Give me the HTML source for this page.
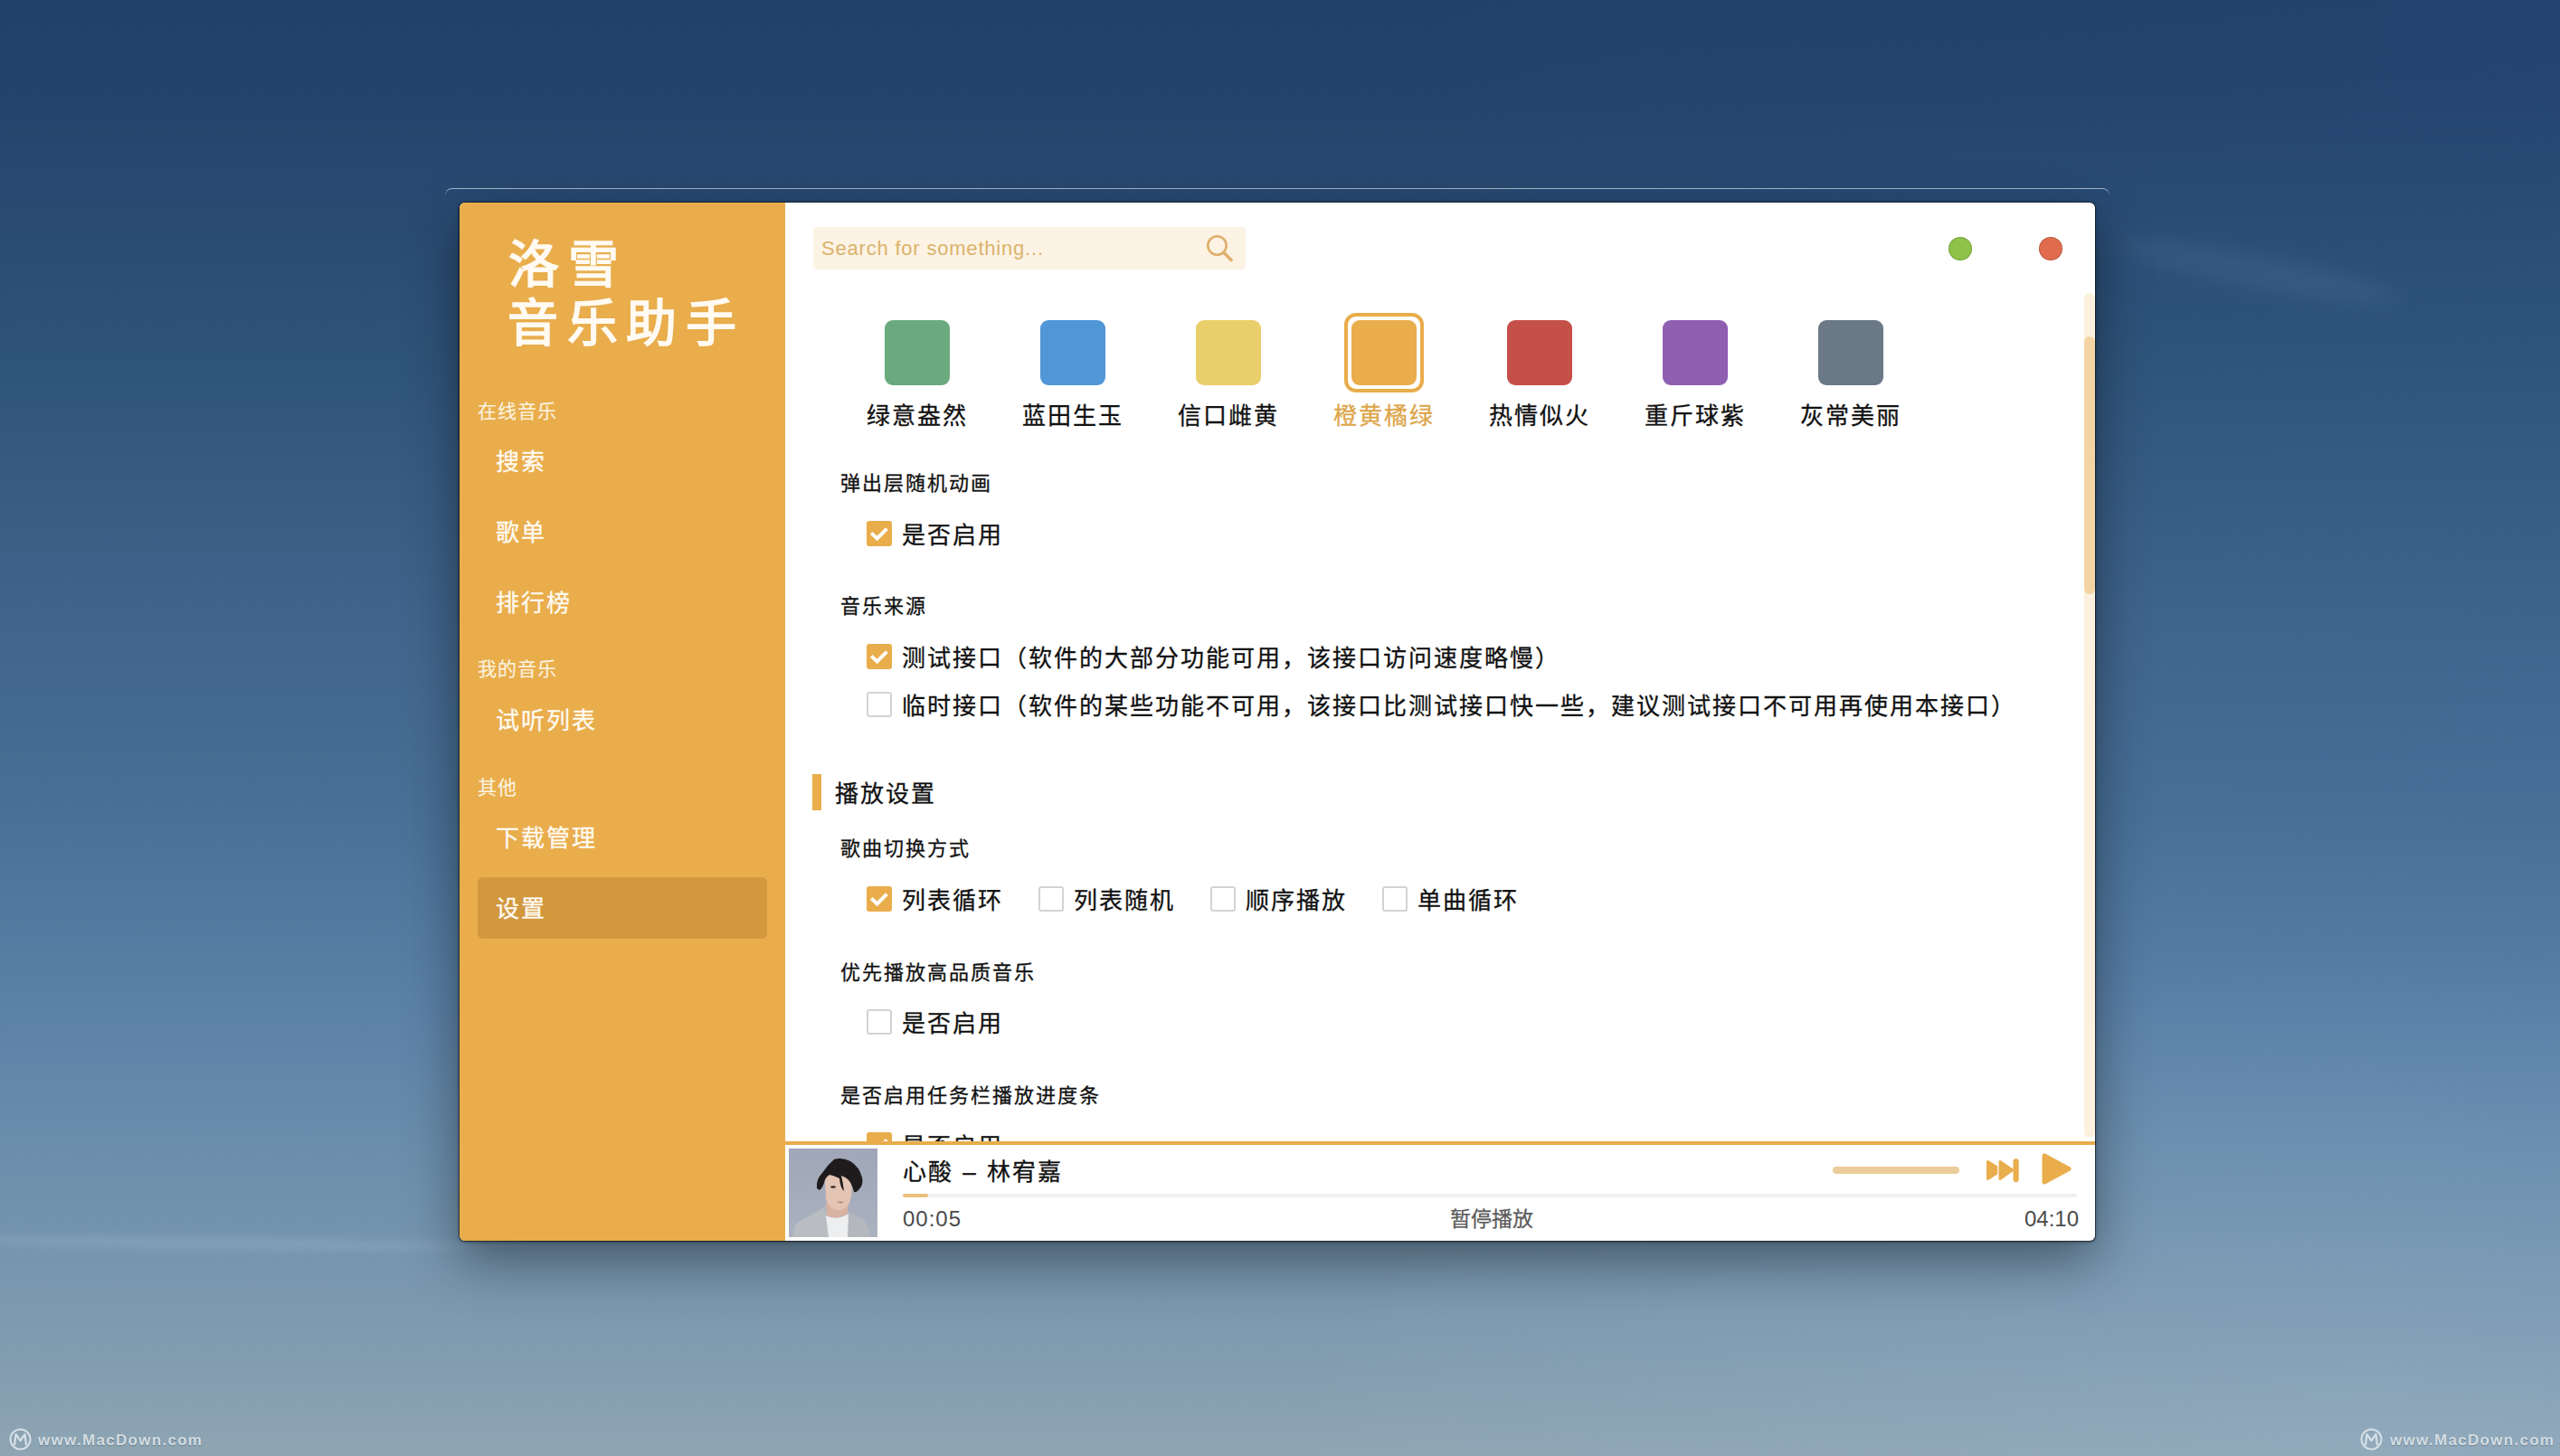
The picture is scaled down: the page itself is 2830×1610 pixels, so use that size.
<!DOCTYPE html>
<html lang="zh-CN"><head><meta charset="utf-8">
<style>
*{margin:0;padding:0;box-sizing:border-box}
html,body{width:2830px;height:1610px;overflow:hidden}
body{position:relative;font-family:"Liberation Sans",sans-serif;
background:radial-gradient(ellipse 45% 35% at 95% 100%,rgba(200,220,235,.16),rgba(200,220,235,0)),linear-gradient(90deg,rgba(40,100,180,0) 55%,rgba(40,100,180,.07) 100%),linear-gradient(180deg,#22416a 0%,#24436c 6.2%,#2f5479 24.8%,#41658c 43.5%,#497096 55.9%,#5a80a6 68.3%,#6d90ad 80.7%,#829cb0 93.2%,#8ea5b3 100%);}
.abs{position:absolute;white-space:nowrap}
#bgwin{position:absolute;left:492px;top:208px;width:1840px;height:60px;border-top:1.5px solid rgba(205,222,240,.75);border-radius:8px 8px 0 0;}
#win{position:absolute;left:508px;top:224px;width:1808px;height:1148px;border-radius:6px;overflow:hidden;background:#fff;box-shadow:0 22px 60px rgba(0,0,0,.42),0 1px 4px rgba(0,0,0,.45),0 0 0 1px rgba(10,20,30,.55)}
#side{position:absolute;left:0;top:0;width:360px;height:1148px;background:#e9ad4c}
.logo{position:absolute;margin-top:1px;color:#fffaf2;font-size:56px;line-height:1;letter-spacing:9.5px;font-weight:700}
.cat{position:absolute;left:20px;margin-top:-0.5px;color:#fbf1df;font-size:21px;letter-spacing:1px;line-height:1;-webkit-text-stroke:0.2px #fbf1df}
.item{position:absolute;left:20px;width:320px;height:68px;border-radius:6px;color:#fffaf2;font-size:26px;letter-spacing:2px;line-height:71px;padding-left:20px;-webkit-text-stroke:0.3px #fffaf2}
.item.on{background:#d2983e}
#main{position:absolute;left:360px;top:0;width:1448px;height:1148px}
.t24{font-size:22px;letter-spacing:2px;line-height:1;color:#111;margin-top:2px;-webkit-text-stroke-width:0.3px}
.t28{font-size:26px;letter-spacing:2px;line-height:1;color:#111;margin-top:3px;-webkit-text-stroke-width:0.3px}
.cb{position:absolute;width:28px;height:28px;border-radius:3px;border:2px solid #d3d3d3;background:#fff}
.cb.on{background:#e9ad4c;border-color:#e9ad4c}
.sw{position:absolute;top:130px;width:72px;height:72px;border-radius:9px}
</style></head><body>
<div class="abs" style="left:-40px;top:1368px;width:560px;height:14px;border-radius:50%;background:rgba(190,210,228,.16);filter:blur(4px);transform:rotate(0.8deg)"></div>
<div class="abs" style="left:2335px;top:282px;width:320px;height:36px;border-radius:50%;background:rgba(170,195,225,.075);filter:blur(10px);transform:rotate(11deg)"></div>
<div id="bgwin"></div>
<div id="win">
 <div id="side">
  <div class="logo abs" style="left:54px;top:40px">洛雪</div>
  <div class="logo abs" style="left:53px;top:105px">音乐助手</div>
  <div class="cat abs" style="top:220px">在线音乐</div>
  <div class="item abs" style="top:252px">搜索</div>
  <div class="item abs" style="top:330px">歌单</div>
  <div class="item abs" style="top:408px">排行榜</div>
  <div class="cat abs" style="top:505px">我的音乐</div>
  <div class="item abs" style="top:538px">试听列表</div>
  <div class="cat abs" style="top:636px">其他</div>
  <div class="item abs" style="top:668px">下载管理</div>
  <div class="item on abs" style="top:746px">设置</div>
 </div>
 <div id="main">
  <div id="search" class="abs" style="left:31px;top:27px;width:478px;height:47px;border-radius:4px;background:#fcf3e4"></div>
  <div class="abs" style="left:40px;top:40px;font-size:22px;letter-spacing:0.8px;line-height:1;color:#dbb26c">Search for something...</div>
  <svg class="abs" style="left:460px;top:31px" width="40" height="40" viewBox="0 0 40 40"><circle cx="17.5" cy="16.5" r="10.2" fill="none" stroke="#dfb06c" stroke-width="2.6"/><line x1="25" y1="24.5" x2="33" y2="32.5" stroke="#dfb06c" stroke-width="3.6" stroke-linecap="round"/></svg>
  <div class="abs" style="left:1286px;top:38px;width:26px;height:26px;border-radius:50%;background:#8ec249;box-shadow:inset 0 0 0 1px rgba(90,110,60,.35)"></div>
  <div class="abs" style="left:1386px;top:38px;width:26px;height:26px;border-radius:50%;background:#e06c4d;box-shadow:inset 0 0 0 1px rgba(120,70,50,.35)"></div>
  <div class="sw" style="left:110px;background:#6baa7e"></div>
  <div class="sw" style="left:282px;background:#5196d6"></div>
  <div class="sw" style="left:454px;background:#e9cf6b"></div>
  <div class="abs" style="left:618px;top:122px;width:88px;height:88px;border:4px solid #e9ad4c;border-radius:13px"></div>
  <div class="sw" style="left:626px;background:#e9ad4c"></div>
  <div class="sw" style="left:798px;background:#c5504a"></div>
  <div class="sw" style="left:970px;background:#8f5fb2"></div>
  <div class="sw" style="left:1142px;background:#6b7886"></div>
  <div class="t28 abs lbl" style="left:90px;top:220px">绿意盎然</div>
  <div class="t28 abs lbl" style="left:262px;top:220px">蓝田生玉</div>
  <div class="t28 abs lbl" style="left:434px;top:220px">信口雌黄</div>
  <div class="t28 abs lbl" style="left:606px;top:220px;color:#dda64b">橙黄橘绿</div>
  <div class="t28 abs lbl" style="left:778px;top:220px">热情似火</div>
  <div class="t28 abs lbl" style="left:950px;top:220px">重斤球紫</div>
  <div class="t28 abs lbl" style="left:1122px;top:220px">灰常美丽</div>

  <div class="t24 abs" style="left:61px;top:298px">弹出层随机动画</div>
  <div class="cb on abs" style="left:90px;top:352px"><svg width="28" height="28" viewBox="0 0 28 28" style="position:absolute;left:-2px;top:-2px"><path d="M5.2 13.4 L11.6 19.4 L22.4 8.6" fill="none" stroke="#fff" stroke-width="4" stroke-linejoin="miter"/></svg></div>
  <div class="t28 abs" style="left:129px;top:352px">是否启用</div>

  <div class="t24 abs" style="left:61px;top:434px">音乐来源</div>
  <div class="cb on abs" style="left:90px;top:488px"><svg width="28" height="28" viewBox="0 0 28 28" style="position:absolute;left:-2px;top:-2px"><path d="M5.2 13.4 L11.6 19.4 L22.4 8.6" fill="none" stroke="#fff" stroke-width="4" stroke-linejoin="miter"/></svg></div>
  <div class="t28 abs" style="left:129px;top:488px">测试接口（软件的大部分功能可用，该接口访问速度略慢）</div>
  <div class="cb abs" style="left:90px;top:541px"></div>
  <div class="t28 abs" style="left:129px;top:541px">临时接口（软件的某些功能不可用，该接口比测试接口快一些，建议测试接口不可用再使用本接口）</div>

  <div class="abs" style="left:30px;top:632px;width:10px;height:40px;background:#e9ad4c"></div>
  <div class="t28 abs" style="left:55px;top:638px">播放设置</div>
  <div class="t24 abs" style="left:61px;top:702px">歌曲切换方式</div>
  <div class="cb on abs" style="left:90px;top:756px"><svg width="28" height="28" viewBox="0 0 28 28" style="position:absolute;left:-2px;top:-2px"><path d="M5.2 13.4 L11.6 19.4 L22.4 8.6" fill="none" stroke="#fff" stroke-width="4" stroke-linejoin="miter"/></svg></div>
  <div class="t28 abs" style="left:129px;top:756px">列表循环</div>
  <div class="cb abs" style="left:280px;top:756px"></div>
  <div class="t28 abs" style="left:319px;top:756px">列表随机</div>
  <div class="cb abs" style="left:470px;top:756px"></div>
  <div class="t28 abs" style="left:509px;top:756px">顺序播放</div>
  <div class="cb abs" style="left:660px;top:756px"></div>
  <div class="t28 abs" style="left:699px;top:756px">单曲循环</div>

  <div class="t24 abs" style="left:61px;top:839px">优先播放高品质音乐</div>
  <div class="cb abs" style="left:90px;top:892px"></div>
  <div class="t28 abs" style="left:129px;top:892px">是否启用</div>
  <div class="t24 abs" style="left:61px;top:975px">是否启用任务栏播放进度条</div>
  <div id="clip" class="abs" style="left:0;top:1020px;width:1448px;height:18px;overflow:hidden">
    <div class="cb on abs" style="left:90px;top:8px"><svg width="28" height="28" viewBox="0 0 28 28" style="position:absolute;left:-2px;top:-2px"><path d="M5.2 13.4 L11.6 19.4 L22.4 8.6" fill="none" stroke="#fff" stroke-width="4" stroke-linejoin="miter"/></svg></div>
    <div class="t28 abs" style="left:129px;top:8px">是否启用</div>
  </div>

  <div class="abs" style="left:1436px;top:100px;width:12px;height:934px;border-radius:6px;background:#fcf0df"></div>
  <div class="abs" style="left:1436px;top:148px;width:12px;height:285px;border-radius:6px;background:#f3d4a2"></div>

  <div class="abs" style="left:0;top:1038px;width:1448px;height:4px;background:#e9ad4c"></div>
  <svg id="art" class="abs" style="left:4px;top:1046px" width="98" height="98" viewBox="0 0 98 98">
  <defs><linearGradient id="bgg" x1="0" y1="0" x2="0" y2="1"><stop offset="0" stop-color="#9fa7b8"/><stop offset="1" stop-color="#aab2c0"/></linearGradient></defs>
  <rect width="98" height="98" fill="url(#bgg)"/>
  <path d="M4 98 L6 86 Q9 80 24 74 L40 64 L46 98 Z" fill="#b9bcc1"/>
  <path d="M64 98 L66 70 Q76 74 84 80 Q89 86 90 98 Z" fill="#b4b8be"/>
  <path d="M41 74 Q53 80 66 72 L65 98 L44 98 Z" fill="#eceef0"/>
  <path d="M41 60 L42 74 Q53 80 65 72 L66 60 Z" fill="#d9b3a2"/>
  <path d="M40 34 Q40 24 52 25 Q66 26 69 38 Q71 52 66 62 Q60 69 54 68 Q45 67 41 56 Z" fill="#e4c4b3"/>
  <path d="M31 44 Q30 34 37 27 Q43 18 50 12 Q58 9 68 14 Q78 20 81 32 Q83 40 77 46 Q74 49 72 48 Q70 40 67 36 Q64 32 58 30 Q60 38 61 47 Q57 44 56 33 Q50 30 45 29 Q40 32 39 38 Q37 44 34 46 Z" fill="#1f1b1d"/>
  <ellipse cx="49" cy="42.5" rx="3" ry="1.3" fill="#3a2a28"/>
  <path d="M53 59 Q57 58 61 59.5 Q57 61.5 53 59 Z" fill="#b98274"/>
</svg>
  <div class="t28 abs" style="left:130px;top:1056px;word-spacing:1px">心酸 – 林宥嘉</div>
  <div class="abs" style="left:130px;top:1096px;width:1298px;height:4px;border-radius:2px;background:#efefef"></div>
  <div class="abs" style="left:130px;top:1096px;width:28px;height:4px;border-radius:2px;background:#ebc07c"></div>
  <div class="abs" style="left:130px;top:1112px;font-size:24px;letter-spacing:1px;line-height:1;color:#4a4a4a">00:05</div>
  <div class="abs" style="left:735px;top:1113px;font-size:23px;line-height:1;color:#5a5a5a;-webkit-text-stroke:0.25px #5a5a5a">暂停播放</div>
  <div class="abs" style="left:1370px;top:1112px;font-size:24px;letter-spacing:0px;line-height:1;color:#4a4a4a">04:10</div>
  <div class="abs" style="left:1158px;top:1066px;width:140px;height:8px;border-radius:4px;background:#eccb9b"></div>
  <svg class="abs" style="left:1322px;top:1052px" width="50" height="40" viewBox="0 0 50 40">
    <path d="M7.5 8.5 L22.5 17.8 L7.5 27.5 Z" fill="#e9ad4c" stroke="#e9ad4c" stroke-width="3" stroke-linejoin="round"/>
    <path d="M21 8.5 L34.5 17.8 L21 27.5 Z" fill="#fff" stroke="#fff" stroke-width="5.5" stroke-linejoin="round"/>
    <path d="M21 8.5 L34.5 17.8 L21 27.5 Z" fill="#e9ad4c" stroke="#e9ad4c" stroke-width="3" stroke-linejoin="round"/>
    <rect x="35.5" y="5.2" width="6.2" height="26" rx="3.1" fill="#e9ad4c"/></svg>
  <svg class="abs" style="left:1384px;top:1046px" width="44" height="44" viewBox="0 0 44 44">
    <path d="M8 8 L35 22.5 L8 37 Z" fill="#e9ad4c" stroke="#e9ad4c" stroke-width="5" stroke-linejoin="round"/></svg>
 </div>
</div>

<div class="abs wm" style="left:10px;top:1579px"><svg width="25" height="25" viewBox="0 0 25 25"><circle cx="12.5" cy="12.5" r="11" fill="none" stroke="#d6e0e6" stroke-width="2"/><path d="M6 19 L7.5 7 L12.5 14 L17.5 7 L19 19" fill="none" stroke="#d6e0e6" stroke-width="2.2" stroke-linejoin="round"/></svg></div>
<div class="abs wm" style="left:42px;top:1584px;font-size:17px;font-weight:700;letter-spacing:1.3px;color:#d3dde3;line-height:1;text-shadow:0 1px 1px rgba(0,0,0,.25)">www.MacDown.com</div>
<div class="abs wm" style="left:2609px;top:1579px"><svg width="25" height="25" viewBox="0 0 25 25"><circle cx="12.5" cy="12.5" r="11" fill="none" stroke="#d6e0e6" stroke-width="2"/><path d="M6 19 L7.5 7 L12.5 14 L17.5 7 L19 19" fill="none" stroke="#d6e0e6" stroke-width="2.2" stroke-linejoin="round"/></svg></div>
<div class="abs wm" style="left:2642px;top:1584px;font-size:17px;font-weight:700;letter-spacing:1.3px;color:#d3dde3;line-height:1;text-shadow:0 1px 1px rgba(0,0,0,.25)">www.MacDown.com</div>
</body></html>
